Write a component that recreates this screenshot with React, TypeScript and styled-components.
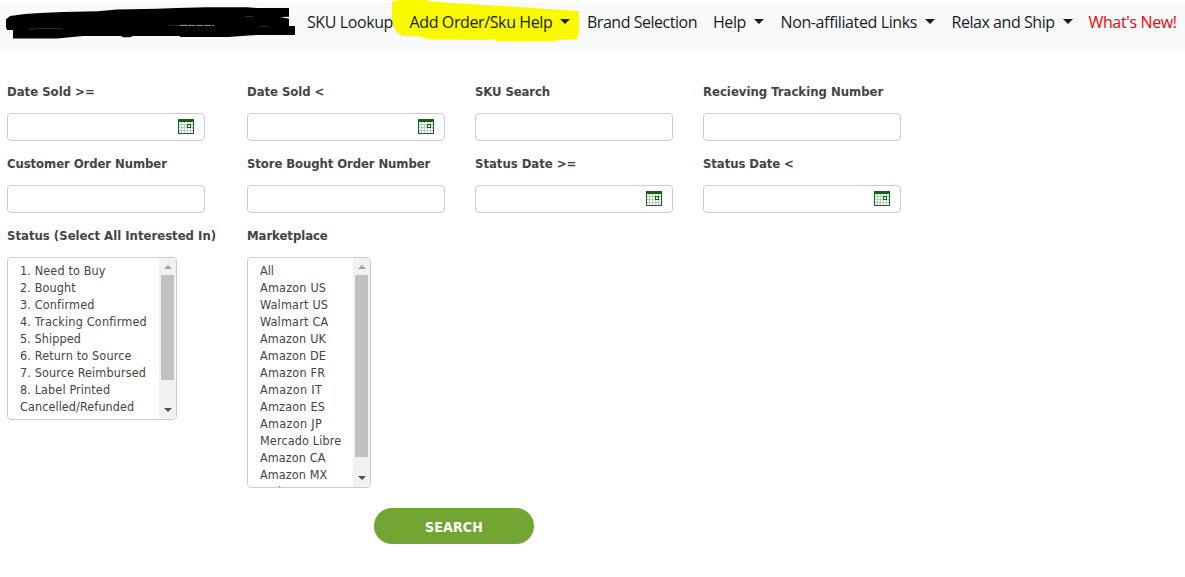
import React from 'react';
import styled, { createGlobalStyle } from 'styled-components';

const GlobalStyle = createGlobalStyle`
  * { box-sizing: border-box; }
  body { margin: 0; background: #fff; overflow: hidden; }
`;

const Page = styled.div`
  width: 1185px;
  height: 577px;
  padding-top: 3px;
  font-family: 'DejaVu Sans Condensed', 'DejaVu Sans', Tahoma, sans-serif;
  font-stretch: condensed;
  color: #444;
`;

const Navbar = styled.nav`
  position: relative;
  display: flex;
  height: 47px;
  padding-left: 307px;
  background: #f8f9fb;
`;

const Marks = styled.svg`
  position: absolute;
  left: 0;
  top: -3px;
`;

const NavItem = styled.a<{ $width: number; $spacing: number; $color?: string }>`
  position: relative;
  display: flex;
  flex: none;
  align-items: center;
  gap: 8px;
  width: ${p => p.$width}px;
  height: 38px;
  font: 16px/24px 'Open Sans', 'Noto Sans', sans-serif;
  letter-spacing: ${p => p.$spacing}px;
  white-space: nowrap;
  color: ${p => p.$color ?? '#1a1b1d'};
`;

const Caret = styled.span`
  border-top: 5px solid currentColor;
  border-left: 5px solid transparent;
  border-right: 5px solid transparent;
  margin-top: -2px;
`;

const Form = styled.form`
  display: grid;
  grid-template-columns: 240px 228px 228px 228px;
  grid-template-rows: 72px 72px auto;
  padding: 30px 0 0 7px;
`;

const Field = styled.div`
  display: flex;
  flex-direction: column;
  align-items: flex-start;
`;

const Label = styled.label<{ $spacing?: number }>`
  height: 33px;
  line-height: 23px;
  font-size: 13px;
  font-weight: bold;
  white-space: nowrap;
  letter-spacing: ${p => p.$spacing ?? 0}px;
`;

const InputBox = styled.div`
  display: flex;
  align-items: center;
  justify-content: flex-end;
  width: 198px;
  height: 28px;
  padding: 0 10px 1px 0;
  border: 1px solid #ccc;
  border-radius: 4px;
  background: #fff;
`;

const ListBox = styled.div<{ $width: number; $height: number }>`
  display: flex;
  width: ${p => p.$width}px;
  height: ${p => p.$height}px;
  overflow: hidden;
  border: 1px solid #ccc;
  border-radius: 4px;
`;

const Options = styled.div`
  flex: 1;
  min-width: 0;
  padding: 4px 0 0 12px;
`;

const Option = styled.div<{ $spacing: number }>`
  height: 17px;
  font-size: 12.5px;
  line-height: 17px;
  letter-spacing: ${p => p.$spacing}px;
  white-space: nowrap;
`;

const Scrollbar = styled.div`
  display: flex;
  flex-direction: column;
  align-items: center;
  width: 17px;
  padding-bottom: 1px;
  background: #f1f1f1;
`;

const Arrow = styled.span<{ $down?: boolean }>`
  display: flex;
  flex: none;
  height: 17px;
  align-items: center;
  &::before {
    content: '';
    border: solid transparent;
    border-width: ${p => (p.$down ? '4px 4px 0' : '0 4px 4px')};
    border-${p => (p.$down ? 'top' : 'bottom')}-color: ${p => (p.$down ? '#505050' : '#a3a3a3')};
  }
`;

const Thumb = styled.span<{ $height: number }>`
  width: 13px;
  height: ${p => p.$height}px;
  margin-bottom: auto;
  background: #c1c1c1;
`;

const SearchButton = styled.button`
  display: block;
  width: 160px;
  height: 36px;
  margin: 20px 0 0 374px;
  padding: 2px 0 0;
  border: 0;
  border-radius: 18px;
  background: #73a533;
  color: #fff;
  font: bold 14px 'DejaVu Sans Condensed', 'DejaVu Sans', sans-serif;
  font-stretch: condensed;
  letter-spacing: 0.2px;
`;

const Calendar = () => (
  <svg width="16" height="15" viewBox="0 0 16 15" shapeRendering="crispEdges">
    <path fill="#b9d3b9" d="M1 5h14v1H1zM1 8h14v1H1zM1 11h14v1H1zM3 3h1v11H3zM6 3h1v11H6zM9 3h1v11H9zM12 3h1v11h-1z" />
    <path fill="#0f6415" d="M0 0h16v3H0zM0 3h1v12H0zM15 3h1v12h-1zM1 14h14v1H1z" />
    <rect x="9.5" y="5.5" width="3" height="3" fill="#fff" stroke="#0f6415" />
  </svg>
);

const navItems = [
  { text: 'SKU Lookup', width: 102.5, spacing: -0.4 },
  { text: 'Add Order/Sku Help', width: 177.5, spacing: -0.38, menu: true },
  { text: 'Brand Selection', width: 126, spacing: -0.47 },
  { text: 'Help', width: 67.5, spacing: -0.45, menu: true },
  { text: 'Non-affiliated Links', width: 171, spacing: -0.38, menu: true },
  { text: 'Relax and Ship', width: 137, spacing: -0.45, menu: true },
  { text: "What's New!", width: 90, spacing: -0.36, color: '#ff0000' },
];

const fields = [
  { label: 'Date Sold >=', date: true, spacing: 0 },
  { label: 'Date Sold <', date: true, spacing: -0.05 },
  { label: 'SKU Search', spacing: -0.1 },
  { label: 'Recieving Tracking Number', spacing: 0 },
  { label: 'Customer Order Number', spacing: -0.09 },
  { label: 'Store Bought Order Number', spacing: -0.1 },
  { label: 'Status Date >=', date: true, spacing: -0.03 },
  { label: 'Status Date <', date: true, spacing: -0.08 },
];

const statuses: [string, number][] = [
  ['1. Need to Buy', 0.14], ['2. Bought', 0.12], ['3. Confirmed', 0.16], ['4. Tracking Confirmed', 0.19],
  ['5. Shipped', 0.1], ['6. Return to Source', 0.16], ['7. Source Reimbursed', 0.12],
  ['8. Label Printed', 0.13], ['Cancelled/Refunded', 0.09],
];

const marketplaces: [string, number][] = [
  ['All', 0], ['Amazon US', 0.2], ['Walmart US', 0.2], ['Walmart CA', 0.2], ['Amazon UK', 0.16],
  ['Amazon DE', 0.13], ['Amazon FR', 0.22], ['Amazon IT', 0.32], ['Amzaon ES', 0.2], ['Amazon JP', 0.32],
  ['Mercado Libre', 0.14], ['Amazon CA', 0.1], ['Amazon MX', 0.1], ['Ember', 0],
];

interface ListProps {
  items: [string, number][];
  width: number;
  height: number;
  thumb: number;
}

const List = ({ items, width, height, thumb }: ListProps) => (
  <ListBox $width={width} $height={height}>
    <Options>
      {items.map(([text, spacing]) => (
        <Option key={text} $spacing={spacing}>{text}</Option>
      ))}
    </Options>
    <Scrollbar>
      <Arrow />
      <Thumb $height={thumb} />
      <Arrow $down />
    </Scrollbar>
  </ListBox>
);

export default function App() {
  return (
    <Page>
      <GlobalStyle />
      <Navbar>
        <Marks width="600" height="50" viewBox="0 0 600 50">
          <path d="M6 19.5L10 16L25 14L40 13L63 12L98 11.3L117 9.5L157 8.7L177 8L207 7.2H247L257 8H289V16.8L280 17L289 18.7V26H295V35H257L228 37H180V36H133L130 37.2H123L121 36H83L57 38.5H13V30H7L6 27Z" />
          <path d="M29 29.2L40 28.6H62M169 25.3H190M245 16.5H253M260 26.4H268" fill="none" stroke="#444" strokeWidth="0.7" />
          <path d="M180 25.4H214" fill="none" stroke="#bbb" strokeWidth="0.8" strokeDasharray="7 1" />
          <path fill="#f9f900" d="M392 1.7L398 0H427L428 1.3L455 3.3L503 6L550 9L579 11V32.5L577 39L556 40V41H495V39.7H457L427 38.7L420 36.5L402 36L396 31.5L393.3 26.5L392 20Z" />
        </Marks>
        {navItems.map(item => (
          <NavItem key={item.text} $width={item.width} $spacing={item.spacing} $color={item.color}>
            {item.text}
            {item.menu && <Caret />}
          </NavItem>
        ))}
      </Navbar>
      <Form onSubmit={e => e.preventDefault()}>
        {fields.map(field => (
          <Field key={field.label}>
            <Label $spacing={field.spacing}>{field.label}</Label>
            <InputBox>{field.date && <Calendar />}</InputBox>
          </Field>
        ))}
        <Field>
          <Label>Status (Select All Interested In)</Label>
          <List items={statuses} width={170} height={163} thumb={105} />
        </Field>
        <Field>
          <Label $spacing={-0.06}>Marketplace</Label>
          <List items={marketplaces} width={124} height={231} thumb={182} />
        </Field>
      </Form>
      <SearchButton type="button">SEARCH</SearchButton>
    </Page>
  );
}
